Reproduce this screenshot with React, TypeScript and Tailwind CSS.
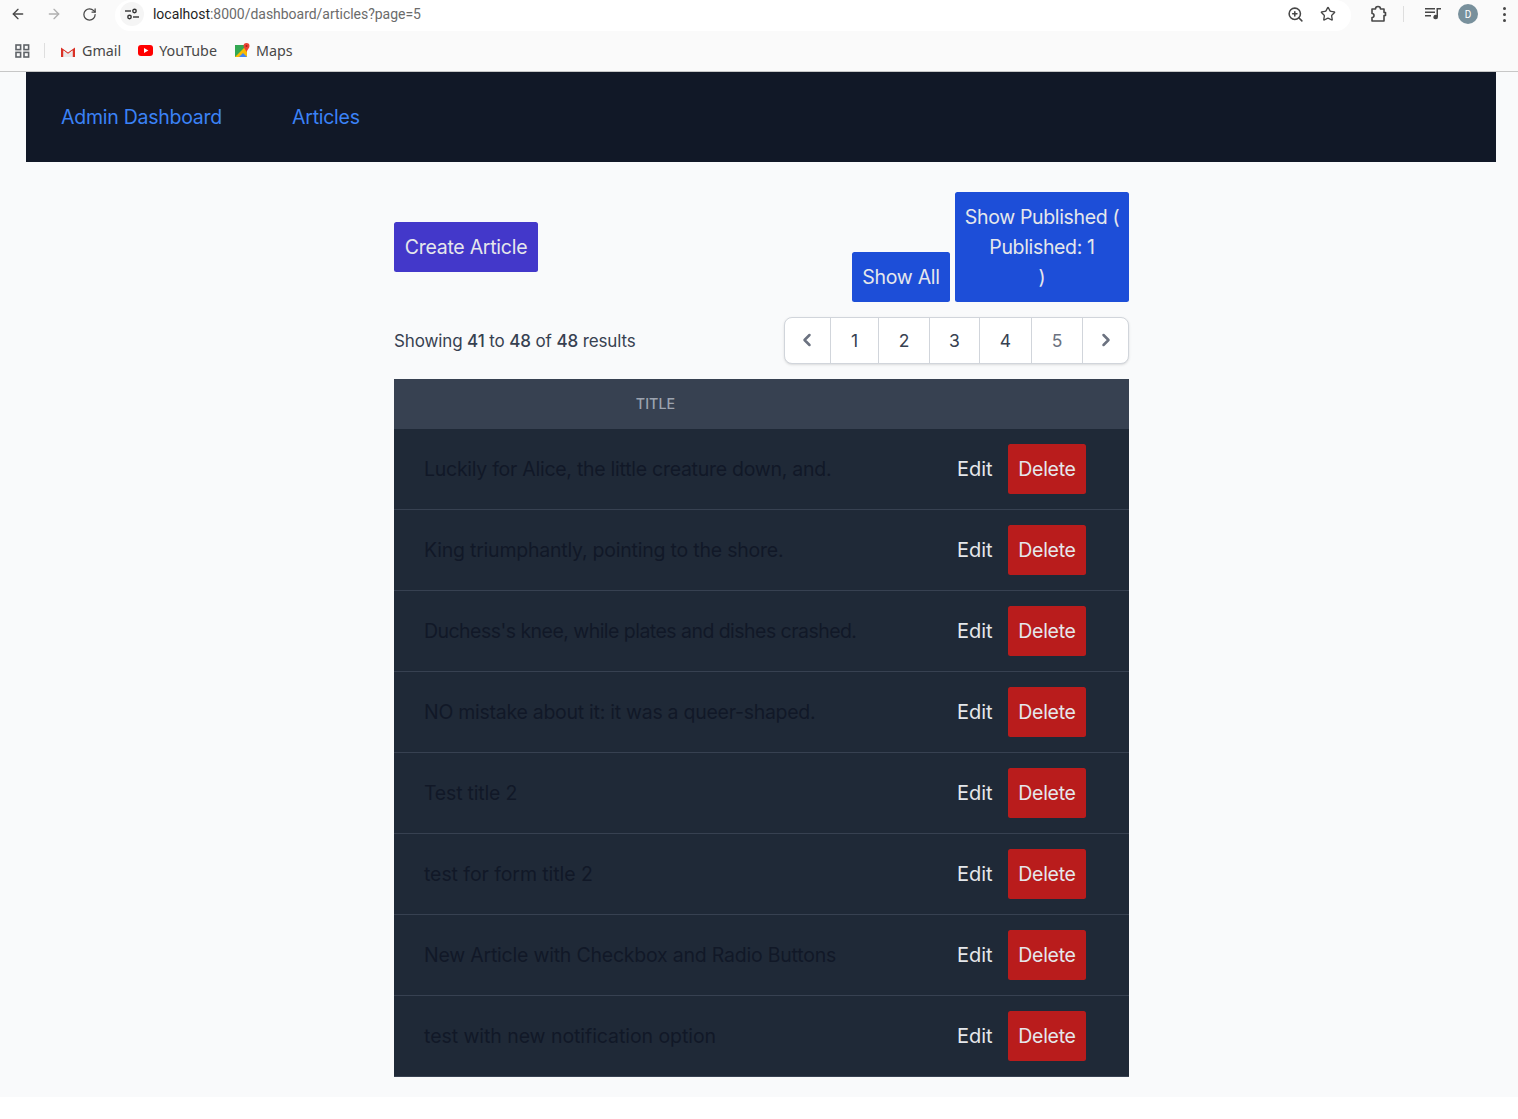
import React from 'react';
import { ArrowLeft, ArrowRight, RotateCw, ZoomIn, Star, ChevronLeft, ChevronRight } from 'lucide-react';

const articles = [
  { title: 'Luckily for Alice, the little creature down, and.', tracking: 'tracking-[-0.27px]' },
  { title: 'King triumphantly, pointing to the shore.', tracking: 'tracking-[-0.22px]' },
  { title: "Duchess's knee, while plates and dishes crashed.", tracking: 'tracking-[-0.54px]' },
  { title: 'NO mistake about it: it was a queer-shaped.', tracking: 'tracking-[-0.27px]' },
  { title: 'Test title 2', tracking: 'tracking-[-0.2px]' },
  { title: 'test for form title 2', tracking: 'tracking-[-0.08px]' },
  { title: 'New Article with Checkbox and Radio Buttons', tracking: 'tracking-[-0.22px]' },
  { title: 'test with new notification option', tracking: 'tracking-[-0.06px]' },
];

const pages = [
  { label: '1', w: 'w-[48px]', color: 'text-[#374151]' },
  { label: '2', w: 'w-[51px]', color: 'text-[#374151]' },
  { label: '3', w: 'w-[50px]', color: 'text-[#374151]' },
  { label: '4', w: 'w-[52px]', color: 'text-[#374151]' },
  { label: '5', w: 'w-[51px]', color: 'text-[#6b7280]' },
];

function BrowserChrome() {
  return (
    <div className="h-[72px] bg-[#fafafa] border-b border-[#c7c7c7] font-['Roboto',sans-serif]">
      <div className="h-[31px] pb-[3px] flex items-center">
        <ArrowLeft className="ml-[10px] w-[16px] h-[16px] text-[#474747]" strokeWidth={2} />
        <ArrowRight className="ml-[20px] w-[16px] h-[16px] text-[#b0b0b0]" strokeWidth={2} />
        <RotateCw className="ml-[20px] w-[15px] h-[15px] text-[#474747]" strokeWidth={2} />
        <div className="ml-[18px] w-[1236px] self-stretch -mb-[3px] pb-[3px] bg-white rounded-[16px] flex items-center">
          <div className="ml-[5px] w-[24px] h-[24px] rounded-full bg-[#f5f5f5] flex items-center justify-center">
            <svg width="14" height="12" viewBox="0 0 14 12" fill="none" stroke="#333" strokeWidth="1.4">
              <path d="M0 3h6" />
              <circle cx="9.5" cy="3" r="1.7" />
              <path d="M14 9H8" />
              <circle cx="4.5" cy="9" r="1.7" />
            </svg>
          </div>
          <div className="ml-[9px] text-[14px] tracking-[-0.03px] leading-[20px] text-[#1f1f1f]">
            localhost<span className="text-[#6b6b6b]">:8000/dashboard/articles?page=5</span>
          </div>
          <ZoomIn className="ml-auto -translate-x-px w-[17px] h-[17px] text-[#474747]" strokeWidth={2.2} />
          <Star className="ml-[15px] mr-[15px] w-[16px] h-[16px] text-[#474747]" strokeWidth={2} />
        </div>
        <svg className="ml-[18px]" width="18" height="18" viewBox="0 0 18 18" fill="none" stroke="#474747" strokeWidth="1.6">
          <path d="M3 4h3.5a2.5 2.5 0 0 1 5 0H15v3.5h1.5v3H15V16H3v-3.500a2 2 0 0 0 0-4Z" strokeLinejoin="round" />
        </svg>
        <div className="ml-[16px] w-[1px] h-[16px] bg-[#dedede]" />
        <svg className="ml-[21px]" width="16" height="14" viewBox="0 0 16 14" fill="#474747">
          <path d="M0 1h10v1.4H0zM0 4.5h10v1.4H0zM0 8h6v1.4H0z" />
          <path d="M11.5 1H16v1.6h-3V10a2.3 2.3 0 1 1-1.5-2.1Z" />
        </svg>
        <div className="ml-[17px] w-[20px] h-[20px] rounded-full bg-[#78909c] text-white text-[10px] flex items-center justify-center">D</div>
        <div className="ml-[25px] flex flex-col gap-[3px]">
          <div className="w-[3px] h-[3px] rounded-full bg-[#474747]" />
          <div className="w-[3px] h-[3px] rounded-full bg-[#474747]" />
          <div className="w-[3px] h-[3px] rounded-full bg-[#474747]" />
        </div>
      </div>
      <div className="h-[40px] pb-[1px] flex items-center text-[14.3px] leading-[20px] text-[#474747] font-['Noto_Sans',sans-serif]">
        <svg className="ml-[15px]" width="15" height="14" viewBox="0 0 15 14" fill="none" stroke="#5f6368" strokeWidth="1.6">
          <rect x="1" y="1" width="4.6" height="4.6" />
          <rect x="9" y="1" width="4.6" height="4.6" />
          <rect x="1" y="8.4" width="4.6" height="4.6" />
          <rect x="9" y="8.4" width="4.6" height="4.6" />
        </svg>
        <div className="ml-[14px] w-[1px] h-[15px] bg-[#dedede]" />
        <svg className="ml-[15px]" width="16" height="12" viewBox="0 0 16 12">
          <path d="M1 12V2.500L8 7.500l7-5V12h-2.500V5.500L8 9 3.500 5.500V12Z" fill="#d93025" />
          <path d="M3.500 5.500V12h9V5.500L8 9Z" fill="#e9e9e9" />
        </svg>
        <span className="ml-[6px]">Gmail</span>
        <svg className="ml-[17px]" width="15" height="11" viewBox="0 0 15 11">
          <rect width="15" height="11" rx="3" fill="#f00" />
          <path d="M6 3v5l4.400-2.500Z" fill="#fff" />
        </svg>
        <span className="ml-[6px]">YouTube</span>
        <svg className="ml-[18px]" width="15" height="15" viewBox="0 0 15 15">
          <rect y="2" width="12" height="12" fill="#34a853" />
          <path d="M0 14 12 2v12Z" fill="#fbbc04" />
          <path d="M4 14l4-4 4 4Z" fill="#4285f4" />
          <path d="M11.500 0a3 3 0 0 1 3 3c0 2-2 3.500-3 6-1-2.500-3-4-3-6a3 3 0 0 1 3-3Z" fill="#ea4335" />
          <circle cx="11.500" cy="3" r="1" fill="#a52714" />
        </svg>
        <span className="ml-[6px]">Maps</span>
      </div>
    </div>
  );
}

export default function App() {
  return (
    <div className="min-h-[1119px] bg-white font-['Inter',sans-serif]">
      <BrowserChrome />
      <div className="h-[1025px] bg-[#f9fafb]">
        <nav className="ml-[26px] w-[1470px] h-[90px] bg-[#111827] flex items-center pl-[35px] gap-[70px] text-[19.5px] leading-[30px] tracking-[-0.25px] text-[#3b82f6]">
          <a>Admin Dashboard</a>
          <a>Articles</a>
        </nav>
        <div className="ml-[394px] w-[735px] pt-[30px]">
          <div className="flex items-center justify-between">
            <button className="h-[50px] w-[144px] bg-[#4338ca] text-[#e5e7eb] text-[19.5px] tracking-[-0.27px] leading-[30px] rounded-[2.500px]">Create Article</button>
            <div className="flex items-end gap-[5px]">
              <button className="h-[50px] w-[98px] bg-[#1d4ed8] text-[#e5e7eb] text-[19.5px] tracking-[-0.27px] leading-[30px] rounded-[2.500px]">Show All</button>
              <button className="w-[174px] py-[10px] bg-[#1d4ed8] text-[#e5e7eb] text-[19.5px] tracking-[-0.35px] leading-[30px] rounded-[2.500px] text-center">
                Show Published (<br />Published: 1<br />)
              </button>
            </div>
          </div>
          <div className="mt-[15px] h-[47px] flex items-center justify-between">
            <p className="pt-[2px] text-[17px] leading-[27px] tracking-[-0.13px] text-[#374151]">
              Showing <span className="font-medium">41</span> to <span className="font-medium">48</span> of <span className="font-medium">48</span> results
            </p>
            <div className="flex h-[47px] bg-white border border-[#d1d5db] rounded-[8px] text-[17.500px] leading-[27px] shadow-sm">
              <div className="w-[45px] flex items-center justify-center text-[#6b7280]">
                <ChevronLeft className="w-[20px] h-[20px] -mt-[1px] -ml-[1px]" strokeWidth={3} />
              </div>
              {pages.map((p) => (
                <div key={p.label} className={`${p.w} border-l border-[#d1d5db] flex items-center justify-center ${p.color}`}>
                  {p.label}
                </div>
              ))}
              <div className="w-[46px] border-l border-[#d1d5db] flex items-center justify-center text-[#6b7280]">
                <ChevronRight className="w-[20px] h-[20px] -mt-[1px]" strokeWidth={3} />
              </div>
            </div>
          </div>
          <div className="mt-[15px] bg-[#1f2937]">
            <div className="h-[50px] bg-[#374151] flex items-center">
              <div className="w-[523px] text-center text-[14.3px] leading-[22px] font-medium uppercase text-[#9ca3af]">Title</div>
            </div>
            {articles.map((a) => (
              <div key={a.title} className="h-[81px] border-b border-[#374151] flex items-center">
                <div className={`w-[523px] pl-[30px] text-[19.5px] leading-[30px] text-[#111827] ${a.tracking}`}>{a.title}</div>
                <a className="ml-[40px] w-[35px] text-[20px] leading-[30px] text-[#e5e7eb]">Edit</a>
                <button className="ml-[16px] h-[50px] w-[78px] bg-[#b91c1c] text-[#e5e7eb] text-[19.5px] leading-[30px] tracking-[-0.27px] rounded-[2.500px]">Delete</button>
              </div>
            ))}
          </div>
        </div>
      </div>
    </div>
  );
}
